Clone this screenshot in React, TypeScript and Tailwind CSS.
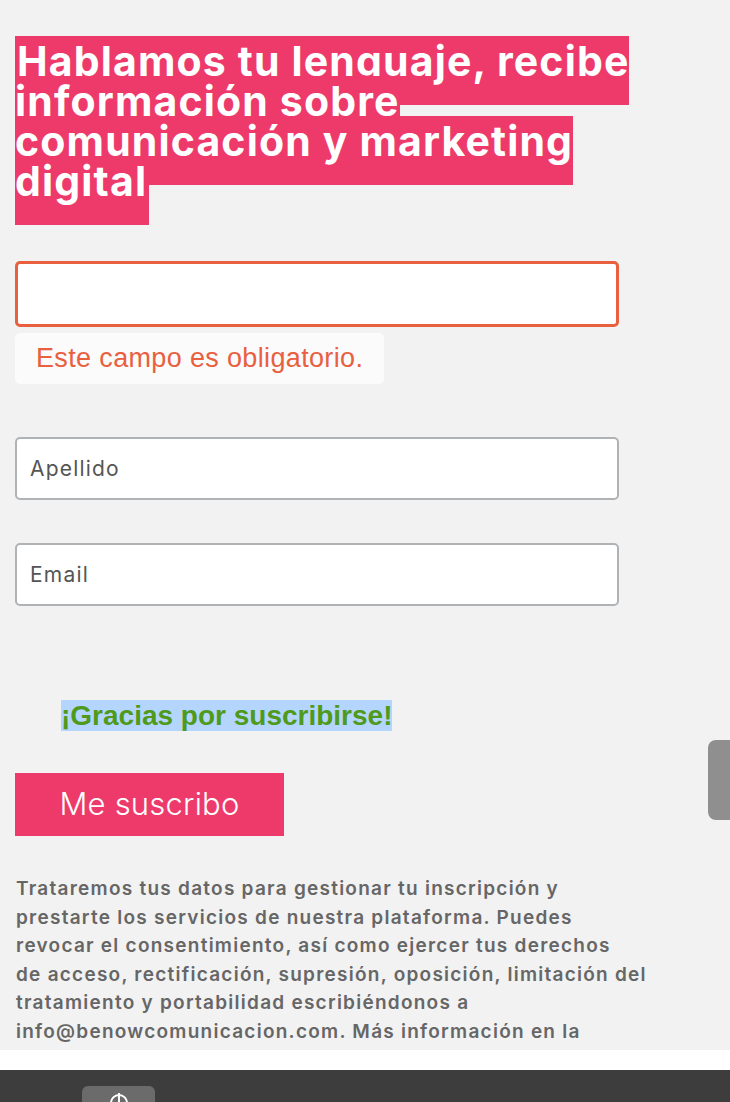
const PINK = "bg-[#ee3a6b]";

const TERMS = [
  "Trataremos tus datos para gestionar tu inscripción y",
  "prestarte los servicios de nuestra plataforma. Puedes",
  "revocar el consentimiento, así como ejercer tus derechos",
  "de acceso, rectificación, supresión, oposición, limitación del",
  "tratamiento y portabilidad escribiéndonos a",
  "info@benowcomunicacion.com. Más información en la",
];

export default function App() {
  return (
    <div className="flex h-[1102px] w-[730px] flex-col overflow-hidden bg-[#f2f2f2] font-['Inter',sans-serif]">
      <div className="relative h-[1050px] overflow-hidden px-[15px] pt-[41px]">
        <h2 className="text-[41px] font-bold leading-[40px] tracking-[1.15px] text-white">
          <span className={`${PINK} pb-[19px] pl-[2px] pr-[2px]`}>
            Hablamos tu lenguaje, recibe
            <br />
            información sobre
            <br />
            comunicación y marketing
            <br />
            digital
          </span>
        </h2>

        <form className="mt-[60px] flex w-[604px] flex-col">
          <input
            type="text"
            className="h-[66px] rounded-[5px] border-[3px] border-[#e9603f] bg-white px-[13px] text-[20px] outline-none"
          />
          <div className="mt-[6px] self-start rounded-[5px] bg-[#fbfbfb] px-[21px] py-[9px] font-['Liberation_Sans',sans-serif] text-[27px] leading-[33px] tracking-[0.35px] text-[#e8603f]">
            Este campo es obligatorio.
          </div>

          <input
            type="text"
            placeholder="Apellido"
            className="mt-[53px] h-[63px] rounded-[5px] border-2 border-[#b0b3b6] bg-white px-[13px] text-[21px] tracking-[1.2px] text-[#555] outline-none placeholder:text-[#555]"
          />
          <input
            type="email"
            placeholder="Email"
            className="mt-[43px] h-[63px] rounded-[5px] border-2 border-[#b0b3b6] bg-white px-[13px] text-[21px] tracking-[1.2px] text-[#555] outline-none placeholder:text-[#555]"
          />

          <p className="mt-[94px] pl-[46px] font-['Liberation_Sans',sans-serif] text-[28px] font-bold leading-[31px] text-[#4f9a1b]">
            <span className="bg-[#b4d5fd]">¡Gracias por suscribirse!</span>
          </p>

          <button
            type="button"
            className="mt-[42px] h-[63px] w-[269px] bg-[#ee3a6b] text-[31px] font-light tracking-[0.2px] text-white"
          >
            Me suscribo
          </button>
        </form>

        <p className="mt-[39px] pl-[1px] text-[19px] font-semibold leading-[28.5px] tracking-[1.25px] text-[#666]">
          {TERMS.map((line) => (
            <span key={line} className="block whitespace-nowrap">
              {line}
            </span>
          ))}
          <span className="block whitespace-nowrap text-[#e8b800]">política de privacidad</span>
        </p>

        <div className="absolute right-0 top-[740px] h-[80px] w-[22px] rounded-l-[8px] bg-[#8f8f8f]" />
      </div>

      <div className="h-[20px] bg-white" />

      <div className="flex h-[32px] items-start bg-[#3d3d3d] pl-[82px] pt-[16px]">
        <div className="flex h-[30px] w-[73px] justify-center rounded-t-[6px] bg-[#6b6b6b] pt-[6px]">
          <svg width="22" height="22" viewBox="0 0 22 22" fill="none" stroke="white" strokeWidth="2">
            <circle cx="11" cy="11" r="8" />
            <line x1="11" y1="1" x2="11" y2="11" />
          </svg>
        </div>
      </div>
    </div>
  );
}
